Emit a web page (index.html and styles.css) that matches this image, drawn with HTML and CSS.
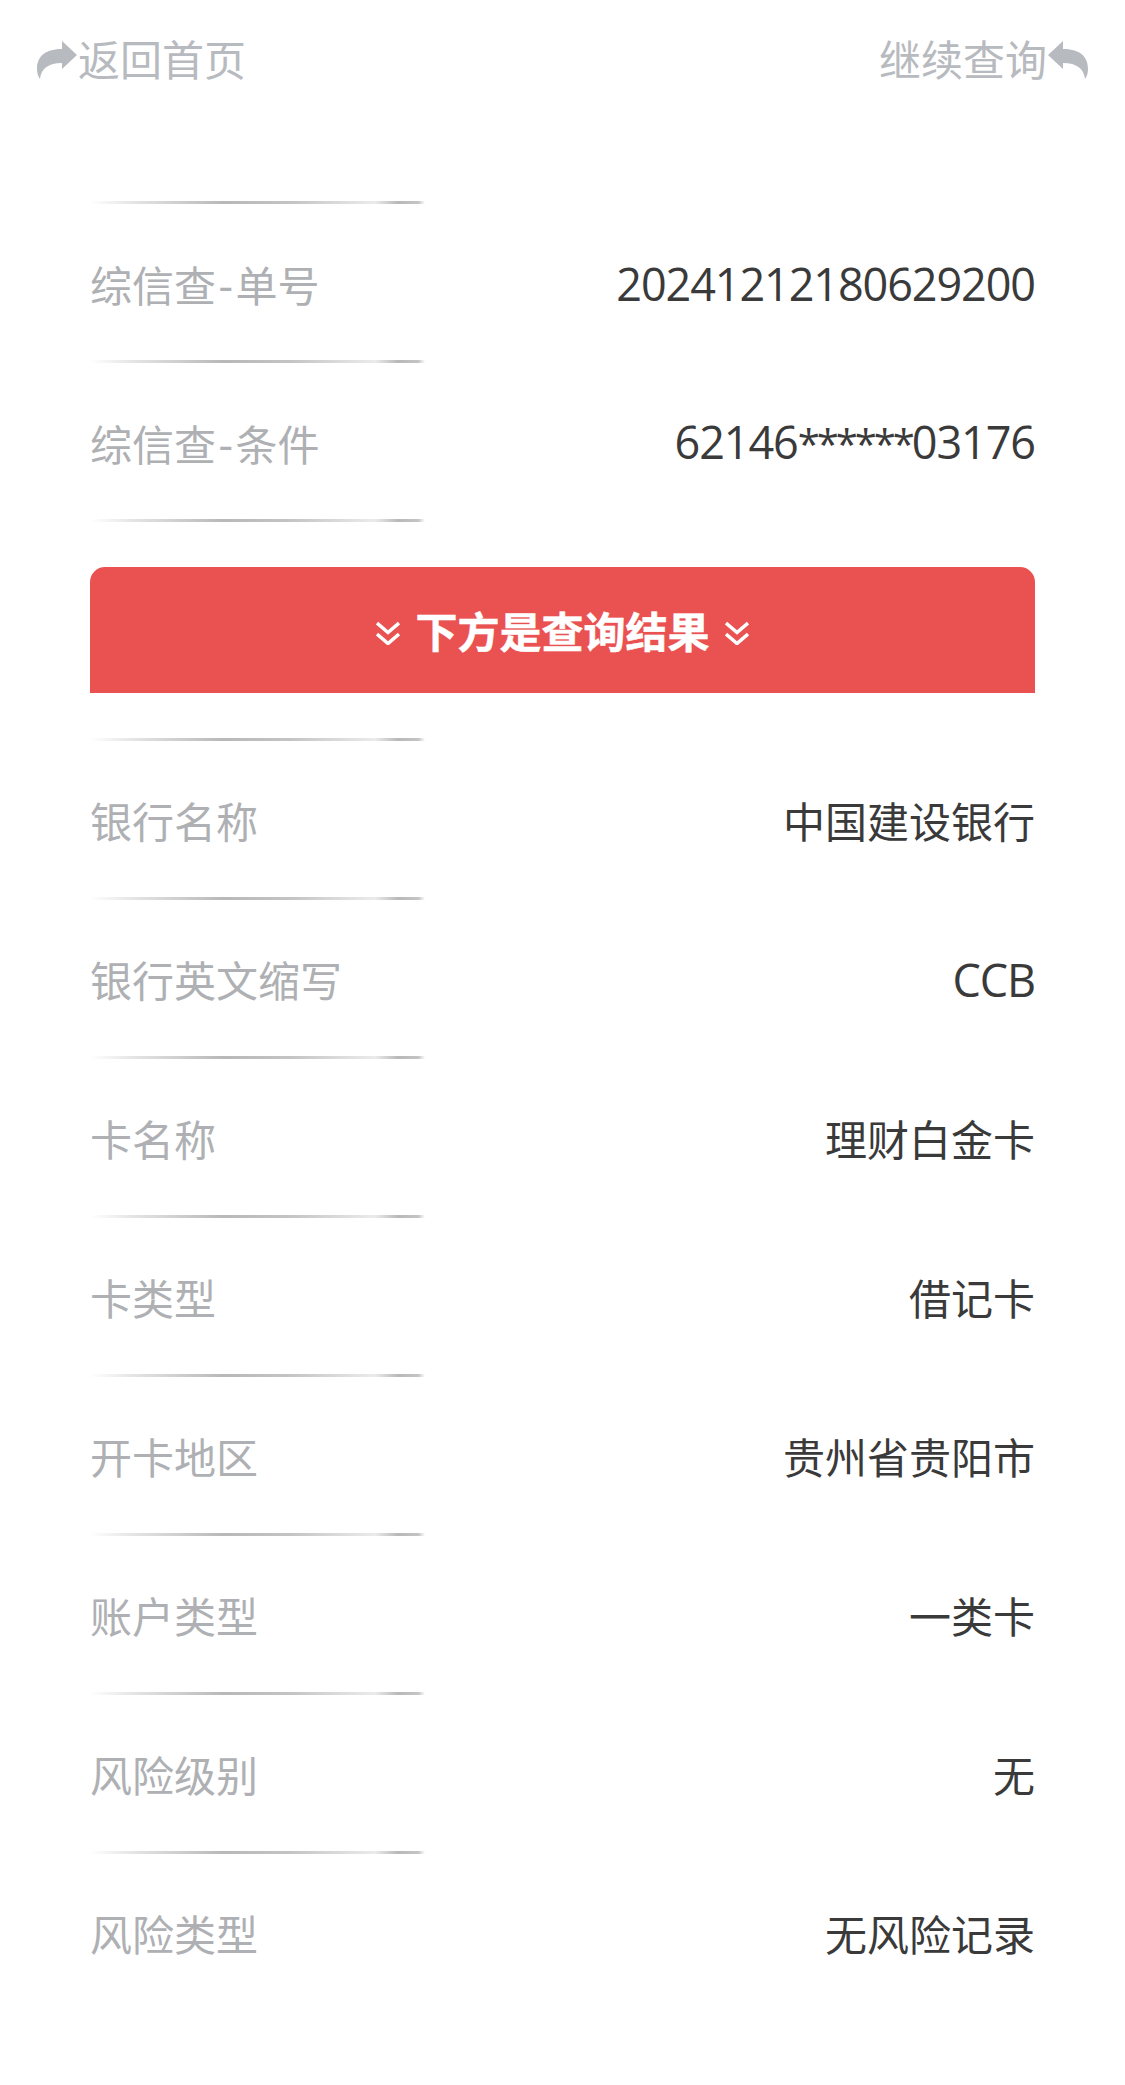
FILE: index.html
```html
<!DOCTYPE html>
<html lang="zh-CN">
<head>
  <meta charset="UTF-8" />
  <meta name="viewport" content="width=device-width, initial-scale=1" />
  <title>查询结果</title>
  <link rel="stylesheet" href="styles.css">
</head>
<body>

  <header class="topbar">
    <a class="nav-link">
      <svg class="nav-icon" viewBox="0 0 42 42"><path d="M41 16 26 2v8C11 10 1 16 1 30c0 4 1 7 3 10 1-10 8-16 22-16v6z"/></svg>
      <span>返回首页</span>
    </a>
    <a class="nav-link">
      <span>继续查询</span>
      <svg class="nav-icon" viewBox="0 0 42 42"><path d="M1 16 16 2v8c15 0 25 6 25 20 0 4-1 7-3 10-1-10-8-16-22-16v6z"/></svg>
    </a>
  </header>

  <main class="content">
    <div class="row"><span class="label">综信查<span class="dash">-</span>单号</span><span class="value num">20241212180629200</span></div>
    <div class="row"><span class="label">综信查<span class="dash">-</span>条件</span><span class="value num">62146<span class="mask">******</span>03176</span></div>
    <div class="divider"></div>

    <div class="banner">
      <svg class="chevrons" viewBox="0 0 24 24"><path d="M1 2 12 11.500 23 2M1 13 12 22.500 23 13"/></svg>
      <span class="banner-text">下方是查询结果</span>
      <svg class="chevrons" viewBox="0 0 24 24"><path d="M1 2 12 11.500 23 2M1 13 12 22.500 23 13"/></svg>
    </div>

    <div class="row"><span class="label">银行名称</span><span class="value">中国建设银行</span></div>
    <div class="row"><span class="label">银行英文缩写</span><span class="value num">CCB</span></div>
    <div class="row"><span class="label">卡名称</span><span class="value">理财白金卡</span></div>
    <div class="row"><span class="label">卡类型</span><span class="value">借记卡</span></div>
    <div class="row"><span class="label">开卡地区</span><span class="value">贵州省贵阳市</span></div>
    <div class="row"><span class="label">账户类型</span><span class="value">一类卡</span></div>
    <div class="row"><span class="label">风险级别</span><span class="value">无</span></div>
    <div class="row"><span class="label">风险类型</span><span class="value">无风险记录</span></div>
  </main>

</body>
</html>
```

FILE: styles.css
```css
:root {
  --line: linear-gradient(90deg, transparent 0, #e6e6e6 12%, #b8b8b8 40%, #c4c4c4 60%, #ebebeb 85%, #b8b8b8 92%, #c4c4c4 98%, transparent 100%);
}

body {
  margin: 0;
  height: 2085px;
  overflow: hidden;
  background: #fff;
  font-family: "Open Sans", "Noto Sans CJK SC", sans-serif;
  font-size: 42px;
  line-height: 60px;
  color: #3a3a3a;
}

.topbar {
  display: flex;
  justify-content: space-between;
  align-items: center;
  height: 120px;
  padding: 0 36px;
}

.nav-link {
  display: flex;
  align-items: center;
  color: #b7babe;
}

.nav-icon {
  width: 42px;
  height: 42px;
  fill: #b7babe;
}

.content {
  padding: 81px 90px 0;
}

.row {
  display: flex;
  justify-content: space-between;
  align-items: center;
  height: 150px;
  padding-top: 9px;
  background: var(--line) left top / 335px 3px no-repeat;
}

.divider {
  width: 335px;
  height: 3px;
  background: var(--line);
}

.label {
  color: #aeb0b3;
}

.dash {
  margin: 0 2.5px;
  font-size: 45px;
}

.num {
  margin-bottom: 2px;
  font-size: 45px;
  letter-spacing: -1.1px;
}

.mask {
  font-size: 40px;
  letter-spacing: -3px;
}

.banner {
  display: flex;
  justify-content: center;
  align-items: center;
  gap: 15px;
  height: 122px;
  margin: 45px 0;
  padding-top: 4px;
  background: #ea5252;
  border-radius: 15px 15px 0 0;
  color: #fff;
  font-weight: 700;
}

.banner-text {
  -webkit-text-stroke: 0.5px #fff;
}

.chevrons {
  width: 24px;
  height: 24px;
  margin-top: 2px;
  fill: none;
  stroke: #fff;
  stroke-width: 3.5;
}
```
